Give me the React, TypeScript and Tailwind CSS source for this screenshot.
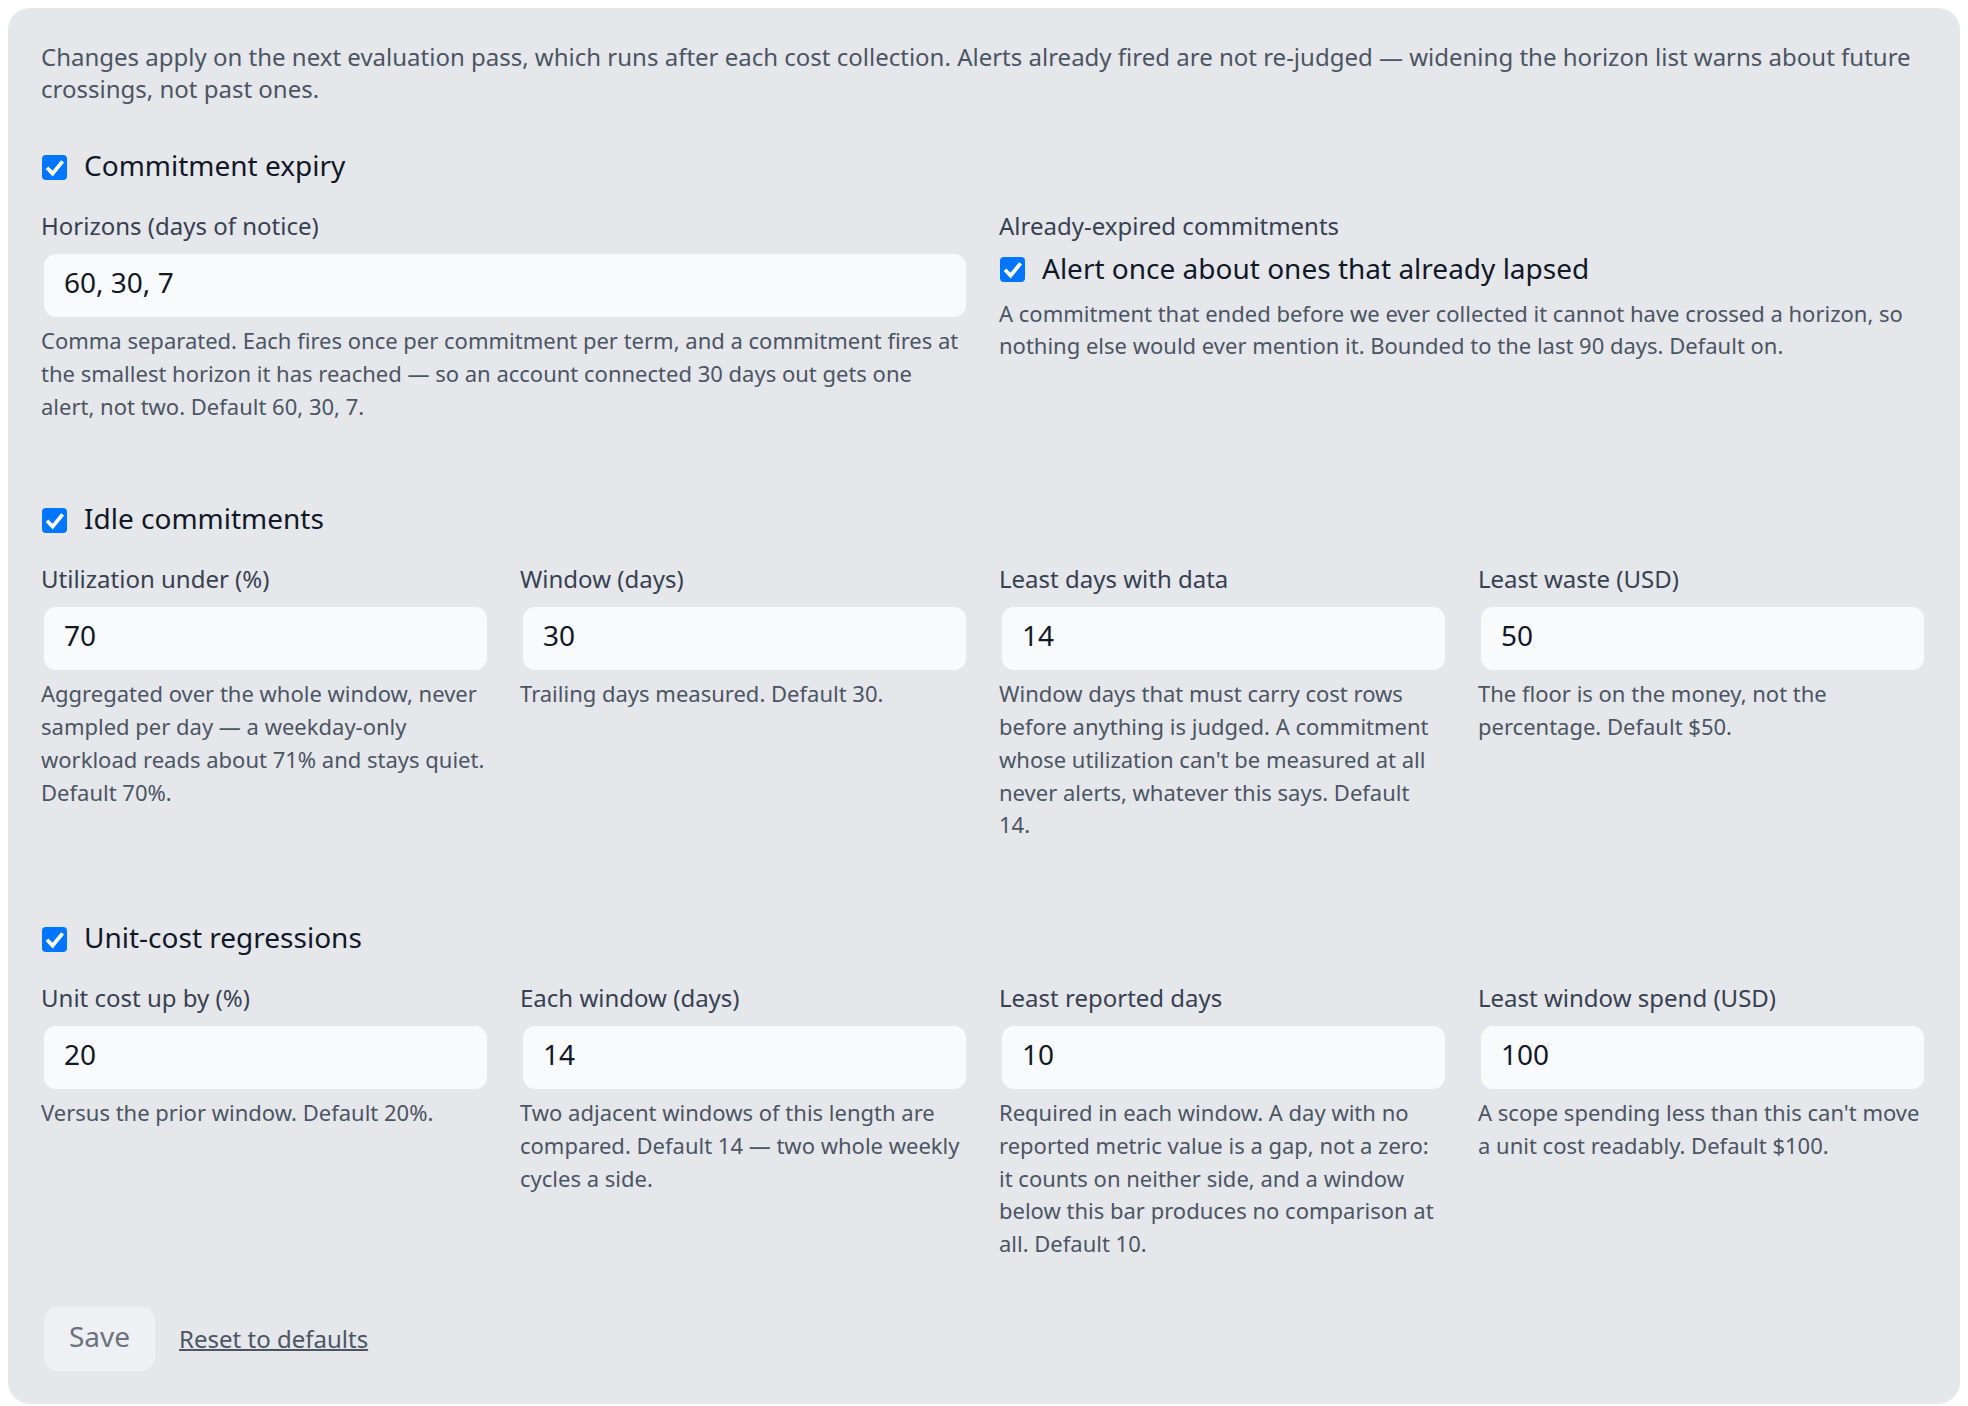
import React from "react";

function Check() {
  return (
    <span className="ml-[1px] mt-[4px] flex h-[25px] w-[25px] shrink-0 items-center justify-center rounded-[4px] bg-[#0075ff]">
      <svg width="25" height="25" viewBox="0 0 25 25" fill="none">
        <path d="M5 12.8 L10.6 18.6 L20.6 6.4" stroke="#ffffff" strokeWidth="3.8" strokeLinecap="butt" strokeLinejoin="miter" />
      </svg>
    </span>
  );
}

function Heading({ title }: { title: string }) {
  return (
    <div className="flex items-center gap-[17px]">
      <Check />
      <span className="text-[28px] leading-[38px] text-[#111827]">{title}</span>
    </div>
  );
}

function Label({ children }: { children: React.ReactNode }) {
  return <div className="text-[24px] leading-[32.4px] text-[#374151]">{children}</div>;
}

function Help({ children, className = "" }: { children: React.ReactNode; className?: string }) {
  return <p className={"pr-[4px] text-[22px] leading-[32.75px] text-[#4b5563] " + className}>{children}</p>;
}

function Field({ label, value, help }: { label: string; value: string; help: string }) {
  return (
    <div className="min-w-0">
      <Label>{label}</Label>
      <input
        defaultValue={value}
        className="mt-[8px] block h-[69px] w-full rounded-[15px] border-[3px] border-transparent bg-[#f9fafb] bg-clip-padding pb-[6px] pl-[20px] text-[28px] text-[#111827] outline-none"
      />
      <Help className="mt-[4.5px]">{help}</Help>
    </div>
  );
}

export default function App() {
  return (
    <div className="min-h-screen bg-white px-2 pt-[8px] font-['Noto_Sans',sans-serif]">
      <div className="rounded-[22px] bg-[#e5e7eb] p-[33px]">
        <p className="text-[24px] leading-[32.4px] text-[#4b5563]">
          Changes apply on the next evaluation pass, which runs after each cost collection. Alerts already fired are not re-judged — widening the horizon list warns about future crossings, not past ones.
        </p>

        <section className="mt-[40.5px]">
          <Heading title="Commitment expiry" />
          <div className="mt-[26px] grid grid-cols-2 gap-x-[30px]">
            <Field
              label="Horizons (days of notice)"
              value="60, 30, 7"
              help="Comma separated. Each fires once per commitment per term, and a commitment fires at the smallest horizon it has reached — so an account connected 30 days out gets one alert, not two. Default 60, 30, 7."
            />
            <div className="min-w-0">
              <Label>Already-expired commitments</Label>
              <div className="mt-[6px] flex items-center gap-[17px]">
                <Check />
                <span className="text-[28px] leading-[38px] text-[#111827]">Alert once about ones that already lapsed</span>
              </div>
              <Help className="mt-[10px]">
                A commitment that ended before we ever collected it cannot have crossed a horizon, so nothing else would ever mention it. Bounded to the last 90 days. Default on.
              </Help>
            </div>
          </div>
        </section>

        <section className="mt-[77px]">
          <Heading title="Idle commitments" />
          <div className="mt-[26px] grid grid-cols-4 gap-x-[30px]">
            <Field
              label="Utilization under (%)"
              value="70"
              help="Aggregated over the whole window, never sampled per day — a weekday-only workload reads about 71% and stays quiet. Default 70%."
            />
            <Field label="Window (days)" value="30" help="Trailing days measured. Default 30." />
            <Field
              label="Least days with data"
              value="14"
              help="Window days that must carry cost rows before anything is judged. A commitment whose utilization can't be measured at all never alerts, whatever this says. Default 14."
            />
            <Field
              label="Least waste (USD)"
              value="50"
              help="The floor is on the money, not the percentage. Default $50."
            />
          </div>
        </section>

        <section className="mt-[77px]">
          <Heading title="Unit-cost regressions" />
          <div className="mt-[26px] grid grid-cols-4 gap-x-[30px]">
            <Field label="Unit cost up by (%)" value="20" help="Versus the prior window. Default 20%." />
            <Field
              label="Each window (days)"
              value="14"
              help="Two adjacent windows of this length are compared. Default 14 — two whole weekly cycles a side."
            />
            <Field
              label="Least reported days"
              value="10"
              help="Required in each window. A day with no reported metric value is a gap, not a zero: it counts on neither side, and a window below this bar produces no comparison at all. Default 10."
            />
            <Field
              label="Least window spend (USD)"
              value="100"
              help="A scope spending less than this can't move a unit cost readably. Default $100."
            />
          </div>
        </section>

        <div className="mt-[47px] flex items-center gap-[24px]">
          <button className="ml-[3px] flex h-[64px] items-center justify-center rounded-[14px] bg-[#eff0f3] px-[25px] pb-[6px] text-[28px] text-[#6b7280]">
            Save
          </button>
          <a className="cursor-pointer text-[24px] text-[#4b5563] underline decoration-2">Reset to defaults</a>
        </div>
      </div>
    </div>
  );
}
